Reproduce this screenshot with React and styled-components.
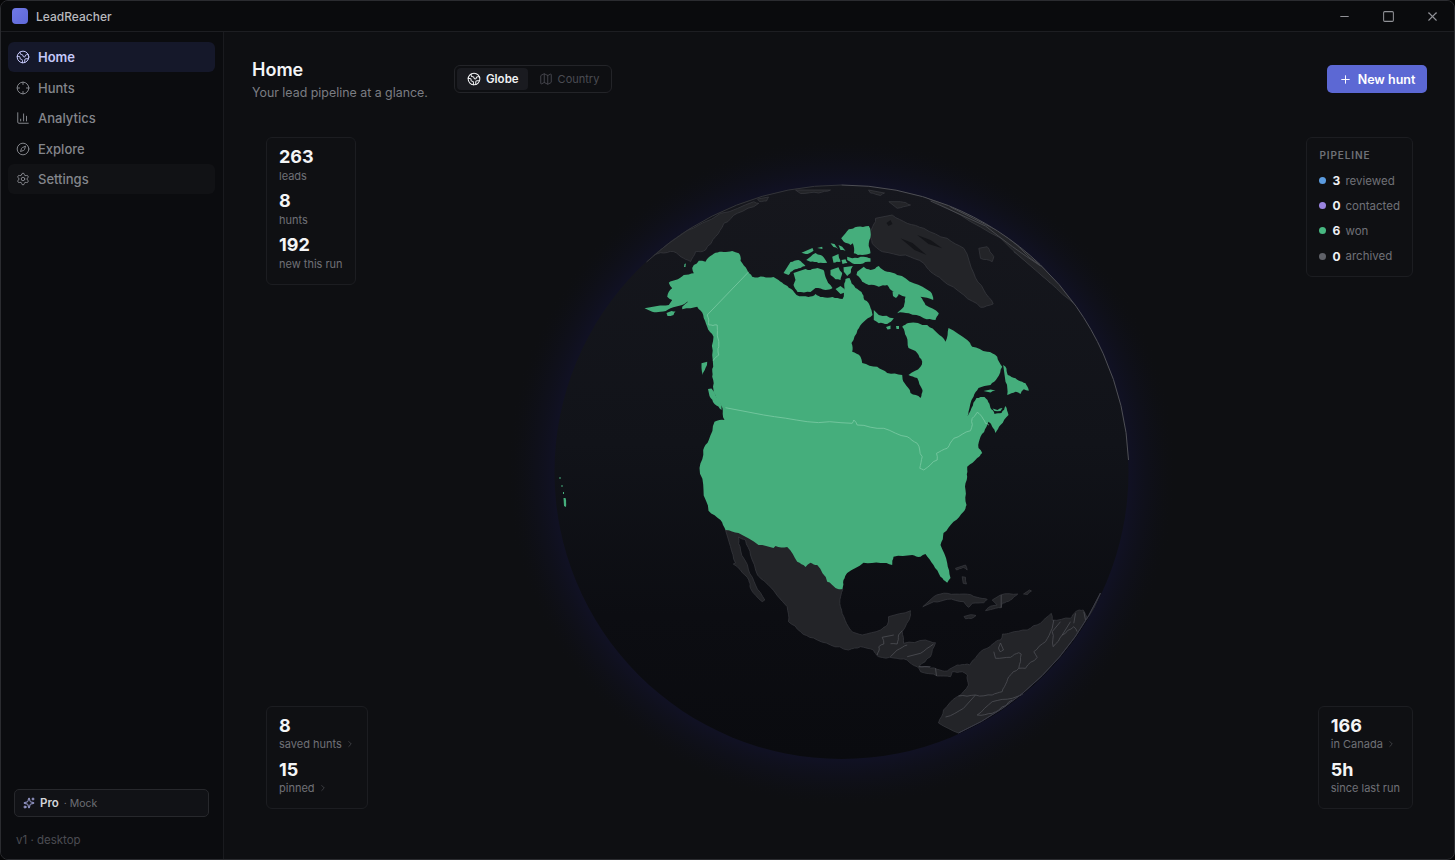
import React from 'react';
import styled, { createGlobalStyle } from 'styled-components';
import {
	ChartColumn,
	ChevronRight,
	Compass,
	Crosshair,
	Earth,
	Map as MapIcon,
	Minus,
	Plus,
	Settings,
	Sparkles,
	Square,
	X,
} from 'lucide-react';

const GlobalStyle = createGlobalStyle`
	html, body {
		margin: 0;
		padding: 0;
		background: #060607;
		font-family: Inter, "Liberation Sans", sans-serif;
	}
`;

const Window = styled.div`
	width: 1455px;
	height: 860px;
	box-sizing: border-box;
	display: flex;
	flex-direction: column;
	border: 1px solid #2b2c30;
	border-radius: 8px;
	overflow: hidden;
	background: #0e0f12;
`;

const TitleBar = styled.header`
	height: 31px;
	box-sizing: border-box;
	flex: none;
	display: flex;
	align-items: center;
	padding-left: 11px;
	background: #0a0b0d;
	border-bottom: 1px solid #1d1e22;
`;

const Logo = styled.div`
	width: 16px;
	height: 16px;
	border-radius: 4px;
	background: linear-gradient(135deg, #7079e6, #5f69d8);
`;

const AppName = styled.span`
	margin-left: 8px;
	font-size: 12px;
	font-weight: 500;
	color: #b8b9bd;
`;

const WindowControls = styled.div`
	margin-left: auto;
	display: flex;
`;

const WindowButton = styled.div`
	width: 44px;
	height: 30px;
	display: flex;
	align-items: center;
	justify-content: center;
	color: #919297;
`;

const Body = styled.div`
	flex: 1;
	min-height: 0;
	display: flex;
`;

const Sidebar = styled.aside`
	width: 223px;
	flex: none;
	display: flex;
	flex-direction: column;
	box-sizing: border-box;
	padding: 10px 8px 0 7px;
	background: #0b0c0f;
	border-right: 1px solid #1a1b1f;
`;

const NavList = styled.nav`
	display: flex;
	flex-direction: column;
	gap: 0.5px;
`;

const NavItem = styled.div`
	height: 30px;
	display: flex;
	align-items: center;
	gap: 8px;
	padding-left: 8px;
	border-radius: 6px;
	font-size: 13px;
	font-weight: ${(p) => (p.$active ? 600 : 500)};
	color: ${(p) => (p.$active ? '#c5c8fa' : '#84868c')};
	background: ${(p) => (p.$active ? '#15182a' : p.$hover ? '#111215' : 'transparent')};
`;

const ProBox = styled.div`
	margin: auto 6px 0 6px;
	height: 28px;
	box-sizing: border-box;
	display: flex;
	align-items: center;
	gap: 5px;
	padding-left: 8px;
	border: 1px solid #27282c;
	border-radius: 5px;
	background: #111216;
	color: #b4b8f2;
`;

const ProName = styled.span`
	font-size: 11.5px;
	font-weight: 600;
	color: #d4d5d9;
`;

const ProPlan = styled.span`
	font-size: 10.5px;
	color: #6d6f75;
`;

const Version = styled.div`
	margin: 16px 0 12px 8px;
	font-size: 11.5px;
	line-height: 14px;
	color: #4c4d53;
`;

const Main = styled.main`
	flex: 1;
	min-width: 0;
	display: flex;
	flex-direction: column;
	padding: 0 27px 20px 28px;
`;

const Header = styled.div`
	flex: none;
	height: 75px;
	display: flex;
	align-items: flex-start;
	padding-top: 28px;
	box-sizing: border-box;
`;

const Heading = styled.div`
	width: 202px;
	margin-top: -1px;
`;

const PageTitle = styled.h1`
	margin: 0;
	font-size: 18px;
	line-height: 22px;
	font-weight: 600;
	color: #f3f4f6;
`;

const Subtitle = styled.p`
	margin: 3px 0 0;
	font-size: 12.4px;
	line-height: 18px;
	color: #7b7d83;
`;

const Toggle = styled.div`
	margin-top: 5px;
	height: 28px;
	box-sizing: border-box;
	display: flex;
	align-items: center;
	padding: 0 2px;
	border: 1px solid #232428;
	border-radius: 6px;
`;

const ToggleOption = styled.div`
	height: 22px;
	display: flex;
	align-items: center;
	gap: 5px;
	padding: ${(p) => (p.$active ? '0 9px 0 10px' : '0 10px 0 11px')};
	border-radius: 4px;
	font-size: ${(p) => (p.$active ? '11.5px' : '11px')};
	font-weight: ${(p) => (p.$active ? 600 : 400)};
	color: ${(p) => (p.$active ? '#f0f1f3' : '#4b4c52')};
	background: ${(p) => (p.$active ? '#1a1b20' : 'transparent')};
`;

const NewHunt = styled.button`
	margin: 5px 0 0 auto;
	height: 28px;
	width: 100px;
	display: flex;
	align-items: center;
	justify-content: center;
	gap: 6px;
	border: none;
	border-radius: 5px;
	background: #5c68d4;
	color: #fff;
	font-family: inherit;
	font-size: 12.5px;
	font-weight: 600;
`;

const Stage = styled.section`
	flex: 1;
	position: relative;
	display: flex;
	align-items: center;
	justify-content: center;
`;

const Card = styled.div`
	position: absolute;
	top: ${(p) => (p.$top ? '30px' : 'auto')};
	bottom: ${(p) => (p.$top ? 'auto' : '30px')};
	left: ${(p) => (p.$left ? '14px' : 'auto')};
	right: ${(p) => (p.$left ? 'auto' : '14px')};
	box-sizing: border-box;
	padding: 8px 12px 5px;
	background: #0f1013;
	border: 1px solid #1c1d21;
	border-radius: 6px;
`;

const Stat = styled.div`
	height: 44.2px;
`;

const StatValue = styled.div`
	font-size: 18px;
	line-height: 22.5px;
	font-weight: 700;
	color: #f4f5f6;
`;

const StatLabel = styled.div`
	display: flex;
	align-items: center;
	gap: 3px;
	font-size: 11px;
	line-height: 14px;
	color: #6f7177;
	white-space: nowrap;

	svg {
		color: #55565c;
	}
`;

const PipelineCard = styled(Card)`
	padding: 11px 12px 7px;
`;

const PipelineTitle = styled.div`
	font-size: 10px;
	line-height: 12px;
	font-weight: 600;
	letter-spacing: 0.09em;
	color: #6f7177;
	margin-bottom: 7px;
`;

const PipelineRow = styled.div`
	height: 25.2px;
	display: flex;
	align-items: center;
	white-space: nowrap;
`;

const Dot = styled.span`
	width: 7px;
	height: 7px;
	border-radius: 50%;
	margin-right: 6px;
	background: ${(p) => p.$color};
`;

const PipelineCount = styled.span`
	width: 13px;
	font-size: 12px;
	font-weight: 700;
	color: #f0f1f3;
`;

const PipelineLabel = styled.span`
	font-size: 11.5px;
	color: #6f7177;
`;

const GlobeSvg = styled.svg`
	width: 680px;
	height: 680px;
	flex: none;
	display: block;
`;

const Green = styled.path`
	fill: #45ae7c;
`;

const Grey = styled.path`
	fill: #232428;
	stroke: #3a3b40;
	stroke-width: 0.7;
	stroke-linejoin: round;
`;

const Cut = styled.path`
	fill: #141519;
`;

const Border = styled.path`
	fill: none;
	stroke: ${(p) => (p.$onGreen ? '#7ccaa4' : '#55565c')};
	stroke-width: ${(p) => (p.$onGreen ? 0.8 : 0.7)};
	stroke-linejoin: round;
`;

const Rim = styled.path`
	fill: none;
	stroke: ${(p) => p.$color};
	stroke-width: 1;
`;

// small seeded wobble so the hand traced coasts don't look like straight facets
const wobble = (x, y) => {
	const v = Math.sin(x * 12.9898 + y * 78.233) * 43758.5453;
	return v - Math.floor(v) - 0.5;
};

const jag = (chunk, rounds = 2) => {
	const n = chunk.match(/-?[\d.]+/g).map(Number);
	let pts = [];
	for (let i = 0; i < n.length; i += 2) pts.push([n[i], n[i + 1]]);
	for (let r = 0; r < rounds; r++) {
		const next = [pts[0]];
		for (let i = 1; i < pts.length; i++) {
			const [ax, ay] = pts[i - 1];
			const [bx, by] = pts[i];
			const len = Math.hypot(bx - ax, by - ay);
			if (len > 3.5) {
				const push = Math.min(len * 0.22, 2) * wobble(ax + bx, ay + by);
				next.push([(ax + bx) / 2 - ((by - ay) / len) * push, (ay + by) / 2 + ((bx - ax) / len) * push]);
			}
			next.push(pts[i]);
		}
		pts = next;
	}
	return pts.map(([x, y]) => `${x.toFixed(1)},${y.toFixed(1)}`).join(' ');
};

const rough = (d) => d.replace(/[ML][^MLAZ]+/g, (chunk) => `${chunk[0]}${jag(chunk.slice(1))} `);

const MAINLAND = `M644,308.3 L656.7,306 668.3,305 671.7,300 666.7,296.7 668.3,291.7 671.7,288.3 668.3,282.7 675,280 683.3,275 693.3,273.3
	691.7,268 693.3,265 698.3,260.7 705,261.7 708.3,257.3 715,252.7 723.3,252 731.7,251 738.3,253.3 740,260.7 746.7,270 751.7,276.7
	763,276.7 773,277 778,280 785,285 792,290 796,295 808,297 815,294 822,297 832,297 842,299 844,288 845,279 849,278 855,288 861,292
	864,300 868,303 871,310 872,315 863,322 857,330 851,343 851.7,351.7 860,356.7 861.7,363 876.7,366.7 886.7,373 901.7,375 904,383
	910,393 920,398 922,390 916.7,378 908,375 920,366.7 921.7,361.7 916.7,353 908,348 906,336.7 901.7,326.7 908,323 926.7,325 936.7,333
	945,341.7 948,328 966.7,340 971.7,346.7 986.7,351.7 996.7,356.7 1001.7,366.7 996.7,378 990,385 978,388 973,396.7 968,411.7 966.7,419
	971,408 976,398 984,397 987,400 990,408 994,414 1001,413 1005,406 1008,415 1000,425 995,433 991.7,426.7 988,421.7 986,426.7 980,436.7
	978,448 981.7,453 976.7,458 966.7,466.7 966.7,476.7 965,490 966,505 963,511.7 953,521.7 943,533 940,545 946.7,563 950,578 946.7,582.7
	940,576.7 933,565 925,554 920,556.7 911.7,555 893,556.7 891.7,565 880,563 863,562.7 846.7,573 843,580 842,589 835,588 826.7,581.7
	816.7,565 810,562.7 805,567 796.7,561.7 786.7,547 775,546 773,548 758,545 738,533 725,530 720,520 708,510.7 703,490 699,468 702.7,450
	708.3,440 714,421.7 724,420 722,408 716,398 713,390 711.7,376.7 712.7,366.7 711.7,355 713,336.7 706.7,326.7 702.7,315 696.7,306.7
	690,308.3 681.7,309.3 681.7,306.7 691.7,300 681.7,305 670,308.3 660,311.7 651.7,311.7 Z`;

const ISLANDS = [
	'M783,273 L790,262 798,260 805,266 800,268 793,270 788,275 Z',
	'M793,273 L805,269 810,270 817,268 823,270 825,277 832,288 825,290 815,288 810,292 797,292 793,285 795,280 Z',
	'M801,252.7 L812,248 813,250.7 805,254 Z',
	'M805.7,260 L810,256.7 815,253 820,255 825,260 826.7,262.7 818,263 810,261.7 Z',
	'M816.7,248 L821.7,246.7 822,249 Z',
	'M830,243.3 L834,244 837.7,249 833,247 Z',
	'M838,245 L841.7,246.7 845,250.7 840,250 Z',
	'M831.7,256.7 L838,254 840,261.7 833,262.7 Z',
	'M841,260 L845,259.3 847,263 842,264 Z',
	'M846.7,256.7 L851.7,258.3 863,256.7 870,258.3 870,261.7 860,264 851.7,263.3 846.7,260 Z',
	'M840.7,238.3 L845,233.3 848.3,229.3 856.7,226.7 868.3,226 870,231.7 868.3,243.3 870,253.3 861.7,255 853.3,253.3 852.3,243.3 850,245 843.3,241.7 Z',
	'M830,270 L838,267.3 841.7,273 840,280 835,279.3 830,275 Z',
	'M843,267.3 L852.3,266 850,273.3 846.7,276 843.3,271.7 Z',
	'M835,289 L840,286 845.7,291.7 840,294 Z',
	'M856.7,271.7 L863.3,266.7 870,270 878.3,266 886.7,271.7 896.7,275 913.3,283.3 930,291.7 932.7,300 920,296.7 925,305 938.3,313.3 935,320 923.3,318.3 908.3,313.3 896.7,313.3 903.3,306.7 905,296.7 893.3,291.7 886.7,285 878.3,286.7 868.3,285 861.7,281.7 856,275 Z',
	'M892,291.5 L897,291 898,295 895.5,298 892.5,296 Z',
	'M873.3,310 L878.3,315 893.3,318.3 886.7,324 878.3,323.3 873.3,320 Z',
	'M885.5,327 L890,325.5 890,329 887,329.5 Z',
	'M895.5,326 L898.5,326 898.5,329 896,329 Z',
	'M1002.7,365 L1005,366.7 1007.3,375 1015,378.3 1021.7,381.7 1025,383.3 1028.3,390.7 1023.3,389.3 1020,394 1015,391.7 1006.7,395 1005,381.7 Z',
	'M983,391 L990,389.5 995,390.5 990,392.5 Z',
	'M992,408.5 L997,410 1002,408 1000,411 994,411 Z',
	'M666,313 L671,311 675,311.5 673,315 667,316 Z',
	'M684,264 L685.5,263.5 685,267 683.5,267 Z',
	'M701,363.3 L706.7,361.7 705,368 702,375 701,368 Z',
	'M707.5,389 L711,388.5 716,397 721,407 721,410 714,404 709,396 Z',
	'M559,477 L560,477 560,479 559,479 Z',
	'M561,485 L562,485 562,487 561,487 Z',
	'M562.5,492 L563.5,492 563.5,494 562.5,494 Z',
	'M563,498 L565,498 565.5,507 563.5,506 Z',
];

const GREY_LANDS = [
	`M725,530 L730,546.7 735,563 732.7,564 740,570 748.3,580 750,588.3 761.7,601.7 764.3,600 755,585 748,570 740,550 738,537 745,540
	750,555 757,575 765,582 768,585 786.7,606.7 788,621.7 800,631.7 813,638 830,645 848,650 860,646.7 873,650 878,656.7 893,658 906.7,660
	916.7,666.7 920,671.7 936.7,676 950,676.7 951.7,671.7 961.7,671.7 967,675 968,685 956.7,696.7 943,710 938,723 958,733
	A286,286 0 0 0 1100,593 L1093,610 1086.7,618.3 1082.7,610 1075,611.7 1070,618.3 1051.7,620 1050.7,613.3 1040,623.3 1026.7,630 1010,632.7
	1002,634 1000,640 992,644 980,651.7 969.3,665 966.7,664 956.7,665 946.7,671 936.7,669.3 930,668 918.3,666.7 930,656.7 935,642.7 925,640
	903,643.3 901.7,631.7 910,615 910,610.7 888,616.7 886.7,625 880,630 861.7,635 850,630 843.3,616.7 839.3,603.3 842.3,589.3
	835,585 810,555 775,540 738,530 Z`,
	'M922.3,606.7 L933.3,596.7 946.7,593.3 963.3,594 976.7,597.3 986.7,599.3 983.3,602.7 971.7,603.3 968.3,607.3 963.3,601.7 946.7,599.3 933.3,601.7 Z',
	'M991.7,600 L1000,595 1017.3,594 1010,600 1001.7,603.3 1000.7,607.7 995,608.3 985,610.7 988.3,607.3 996.7,605 Z',
	'M963.5,616.5 L970,614.7 975.5,615.5 971,618.5 965,618.8 Z',
	'M1023,594 L1029,590 1031,591 1027,594.5 Z',
	'M955,568.3 L965,565 966.7,570 962.7,567.3 956,570 Z',
	'M961.7,576.7 L965,577.3 966,584 962.7,583.3 Z',
	'M875,218.3 L891.7,215 906.7,223.3 923.3,228.3 946.7,238.3 963.3,248.3 973.3,273.3 983.3,290 992.7,304 980,307.3 963.3,295 941.7,280 930,271.7 923.3,263.3 905,255 881.7,251.7 871.7,243.3 870,231.7 875,221.7 Z',
	'M978.3,248.3 L986.7,246.7 993.3,256.7 991.7,261.7 980,258.3 Z',
	'M888.3,201.7 L900,201.7 910,205 896.7,208.3 Z',
	'M1013.3,251.7 L1030,260 1050,283.3 1033.3,268.3 Z',
	'M923,196 L960,215 1000,238 1050,283 1075,305 1085,290 1010,220 940,185 Z',
	'M648.3,256.7 L666.7,245 683.3,231.7 720,213.3 753.3,201.7 758.3,203.3 736.7,213.3 723.3,223.3 715,236.7 705,250 695,251.7 690,261.7 683.3,258.3 673.3,251.7 660,252.7 Z',
	'M757,199 L768,197 766,201 759,201.5 Z',
	'M795,190 L830,190 818,193 800,193.5 Z',
	'M868,190 L884,193 880,195.5 870,193 Z',
];

const GREY_BORDERS = [
	'M893.3,635 L881.7,637.3 883.3,644 878.3,646.7 876.7,655',
	'M901.7,630.7 L898,635 896.7,644 890,643.7',
	'M890,656.7 L896.7,650 906.7,645',
	'M906.7,656.7 L920,653.3 933,644',
	'M918.3,666.7 L930,666.7',
	'M935,668.3 L936,676',
	'M993.3,651.7 L995,658.3 1010,657.3 1018.3,652.7 1020.7,654 1018.3,668.3 1008.3,676.7 1004,686.7 1001.7,691.7 991.7,695 975,695 958,696',
	'M975,695 L963,708.3 945,717',
	'M1026.7,693 L1011.7,698.3 991.7,701.7 976.7,715 991.7,713.3 998.3,710 1011.7,700',
	'M1053.3,620 L1051.7,628.3 1045,641.7 1033.3,651.7 1036.7,657.3 1025,668.3 1018.3,668.3',
	'M1060,621.7 L1051.7,631.7 1052.7,646.7 1061.7,635 1073.3,626.7 1076.7,631.7',
	'M1075,613.3 L1073.3,623.3',
	'M1083.3,611.7 L1085,620',
	'M1061.7,635 L1070,621.7',
	'M1000.7,595 L1000.7,607.7',
	'M1000,643 L1003,650 1000,652 998,648 Z',
	'M930,201 L985,226 1040,266',
	'M950,207 L1000,232 1060,282',
];

const GREEN_BORDERS = [
	'M725,407.7 L763.3,415 806.7,421.7 851.7,423.3 853.3,420 856.7,425 883.3,428.3 906.7,436.7 916.7,443.3 921.7,456.7 919.3,468.3 923.3,470 936.7,460 936,453.3 946.7,448.3 953.3,438.3 970,430.7 971.7,418.3 976.7,412.3 980,415 985,423.3 988.3,425',
	'M748.3,271.7 L706.7,315 708.3,325 716.7,325 718.3,346.7 718.3,355 712.7,360.7',
];

const CUTS = [
	'M900,238.3 L912,243 926,255 914,250 Z',
	'M916.7,235 L930,240 941.7,248.3 928,244 Z',
	'M886,223 L890,220 892,224 888,226 Z',
];

function Globe() {
	return (
		<GlobeSvg viewBox="499.5 133 680 680">
			<defs>
				<radialGradient id="halo" gradientUnits="userSpaceOnUse" cx="841" cy="472" r="336">
					<stop offset="0.82" stopColor="#14143a" stopOpacity="0.5" />
					<stop offset="0.86" stopColor="#14143a" stopOpacity="0.42" />
					<stop offset="0.94" stopColor="#11122c" stopOpacity="0.15" />
					<stop offset="1" stopColor="#0e0f12" stopOpacity="0" />
				</radialGradient>
				<linearGradient id="ocean" x1="0" y1="0" x2="0" y2="1">
					<stop offset="0" stopColor="#16171d" />
					<stop offset="0.45" stopColor="#111319" />
					<stop offset="0.75" stopColor="#0c0d12" />
					<stop offset="1" stopColor="#0a0b0f" />
				</linearGradient>
				<clipPath id="sphere">
					<circle cx="841" cy="472" r="287" />
				</clipPath>
			</defs>
			<circle cx="841" cy="472" r="336" fill="url(#halo)" />
			<circle cx="841" cy="472" r="287" fill="url(#ocean)" />
			<g clipPath="url(#sphere)">
				{GREY_LANDS.map((d) => (
					<Grey key={d} d={rough(d)} />
				))}
				{GREY_BORDERS.map((d) => (
					<Border key={d} d={rough(d)} />
				))}
				<Green d={rough(MAINLAND)} />
				{ISLANDS.map((d) => (
					<Green key={d} d={rough(d)} />
				))}
				{GREEN_BORDERS.map((d) => (
					<Border key={d} d={rough(d)} $onGreen />
				))}
				{CUTS.map((d) => (
					<Cut key={d} d={d} />
				))}
			</g>
			<Rim d="M646,262 A287,287 0 0 1 841,185" $color="#33343a" />
			<Rim d="M841,185 A287,287 0 0 1 1128,460" $color="#4e4f55" />
			<Rim d="M1100,593 A287,287 0 0 1 958,733" $color="#3a3b48" />
		</GlobeSvg>
	);
}

const NAV = [
	{ label: 'Home', icon: Earth, active: true },
	{ label: 'Hunts', icon: Crosshair },
	{ label: 'Analytics', icon: ChartColumn },
	{ label: 'Explore', icon: Compass },
	{ label: 'Settings', icon: Settings, hover: true },
];

const PIPELINE = [
	{ color: '#5b9bdf', count: 3, label: 'reviewed' },
	{ color: '#9a84e0', count: 0, label: 'contacted' },
	{ color: '#47b881', count: 6, label: 'won' },
	{ color: '#5f6168', count: 0, label: 'archived' },
];

function StatBlock({ value, label, link }) {
	return (
		<Stat>
			<StatValue>{value}</StatValue>
			<StatLabel>
				{label}
				{link && <ChevronRight size={10} strokeWidth={1.5} />}
			</StatLabel>
		</Stat>
	);
}

export default function App() {
	return (
		<>
			<GlobalStyle />
			<Window>
				<TitleBar>
					<Logo />
					<AppName>LeadReacher</AppName>
					<WindowControls>
						<WindowButton><Minus size={13} strokeWidth={1.9} /></WindowButton>
						<WindowButton><Square size={13} strokeWidth={1.9} /></WindowButton>
						<WindowButton><X size={15} strokeWidth={1.7} /></WindowButton>
					</WindowControls>
				</TitleBar>
				<Body>
					<Sidebar>
						<NavList>
							{NAV.map(({ label, icon: Icon, active, hover }) => (
								<NavItem key={label} $active={active} $hover={hover}>
									<Icon size={14} strokeWidth={1.7} />
									{label}
								</NavItem>
							))}
						</NavList>
						<ProBox>
							<Sparkles size={12} strokeWidth={1.8} />
							<ProName>Pro</ProName>
							<ProPlan>· Mock</ProPlan>
						</ProBox>
						<Version>v1 · desktop</Version>
					</Sidebar>
					<Main>
						<Header>
							<Heading>
								<PageTitle>Home</PageTitle>
								<Subtitle>Your lead pipeline at a glance.</Subtitle>
							</Heading>
							<Toggle>
								<ToggleOption $active>
									<Earth size={14} strokeWidth={1.8} />
									Globe
								</ToggleOption>
								<ToggleOption>
									<MapIcon size={14} strokeWidth={1.5} />
									Country
								</ToggleOption>
							</Toggle>
							<NewHunt>
								<Plus size={13} strokeWidth={1.8} />
								New hunt
							</NewHunt>
						</Header>
						<Stage>
							<Globe />
							<Card $top $left>
								<StatBlock value="263" label="leads" />
								<StatBlock value="8" label="hunts" />
								<StatBlock value="192" label="new this run" />
							</Card>
							<PipelineCard $top>
								<PipelineTitle>PIPELINE</PipelineTitle>
								{PIPELINE.map((row) => (
									<PipelineRow key={row.label}>
										<Dot $color={row.color} />
										<PipelineCount>{row.count}</PipelineCount>
										<PipelineLabel>{row.label}</PipelineLabel>
									</PipelineRow>
								))}
							</PipelineCard>
							<Card $left>
								<StatBlock value="8" label="saved hunts" link />
								<StatBlock value="15" label="pinned" link />
							</Card>
							<Card>
								<StatBlock value="166" label="in Canada" link />
								<StatBlock value="5h" label="since last run" />
							</Card>
						</Stage>
					</Main>
				</Body>
			</Window>
		</>
	);
}
